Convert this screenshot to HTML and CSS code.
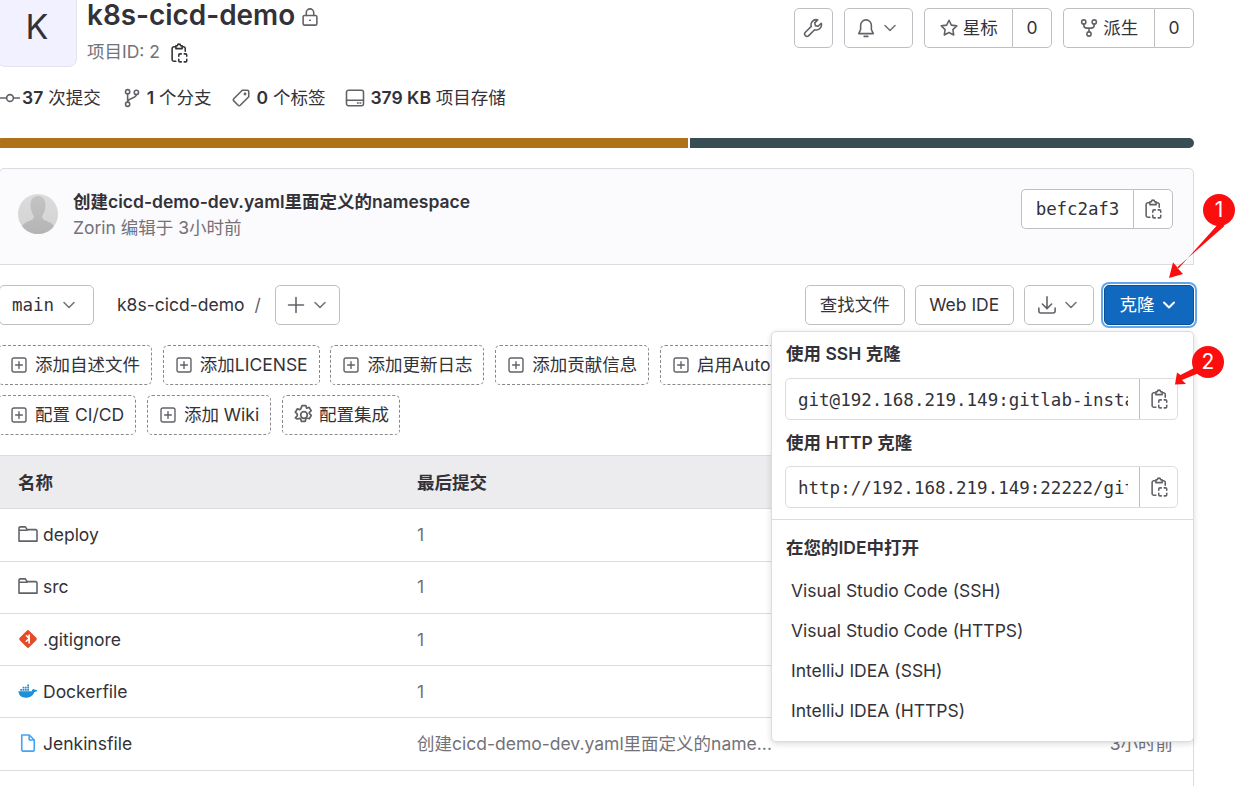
FILE: index.html
```html
<!DOCTYPE html>
<html lang="zh">
<head>
<meta charset="utf-8">
<title>k8s-cicd-demo</title>
<link rel="stylesheet" href="styles.css">
</head>
<body>
<svg class="sprite" width="0" height="0">
  <symbol id="i-copy" viewBox="0 0 16 16"><path d="M5 3H4A1.400 1.400 0 0 0 2.500 4.400v8.800A1.400 1.400 0 0 0 4 14.600H5.500M11 3h.5A1.400 1.400 0 0 1 13 4.400V6.500M5.500 2.200h1.200a1.300 1.300 0 0 1 2.600 0h1.200V4.500H5.500z"/><path d="M7.800 10.500V9.700A1 1 0 0 1 8.800 8.700H9.800M12.200 8.700h1a1 1 0 0 1 1 1v.8M14.200 13v1.100a1 1 0 0 1-1 1H12.200M9.800 15.100h-1a1 1 0 0 1-1-1V13"/></symbol>
  <symbol id="i-chev" viewBox="0 0 16 16"><path d="M4 6l4 4 4-4"/></symbol>
  <symbol id="i-wrench" viewBox="0 0 16 16"><path d="M10.600 1.300a4.200 4.200 0 0 0-4 5.400L1.900 11.400a1.900 1.900 0 0 0 2.700 2.700l4.700-4.700a4.200 4.200 0 0 0 5.300-5.200l-2.500 2.400-2.200-.5-.5-2.200 2.400-2.400a4.200 4.200 0 0 0-1.200-.2z"/></symbol>
  <symbol id="i-bell" viewBox="0 0 16 16"><path d="M8 1.500A4.300 4.300 0 0 0 3.700 5.800v3.400L2.200 12.500h11.600l-1.500-3.300V5.800A4.300 4.300 0 0 0 8 1.500zM6.500 14.700h3"/></symbol>
  <symbol id="i-star" viewBox="0 0 16 16"><path d="M8 1.800l1.900 3.900 4.300.6-3.100 3 .7 4.300L8 11.600l-3.800 2 .7-4.300-3.100-3 4.300-.6z"/></symbol>
  <symbol id="i-fork" viewBox="0 0 16 16"><circle cx="3.800" cy="3.200" r="1.700"/><circle cx="12.200" cy="3.200" r="1.700"/><circle cx="8" cy="12.800" r="1.700"/><path d="M3.800 4.900v.6a2.600 2.600 0 0 0 2.600 2.600h3.200a2.600 2.600 0 0 0 2.600-2.600v-.6M8 8.100v3"/></symbol>
  <symbol id="i-commit" viewBox="0 0 16 16"><circle cx="8" cy="8" r="2.700"/><path d="M0 8h5.300M10.700 8H16"/></symbol>
  <symbol id="i-branch" viewBox="0 0 16 16"><circle cx="4.500" cy="3" r="1.700"/><circle cx="4.500" cy="13" r="1.700"/><circle cx="11.500" cy="3.500" r="1.700"/><path d="M4.500 4.700v6.600M11.500 5.200c0 3.600-7 2.400-7 6.100"/></symbol>
  <symbol id="i-tag" viewBox="0 0 16 16"><path d="M9 1.800h4a1.200 1.200 0 0 1 1.200 1.200v4L7.400 13.800a1.200 1.200 0 0 1-1.700 0L2.200 10.300a1.200 1.200 0 0 1 0-1.700z"/><circle cx="11.200" cy="4.800" r=".5"/></symbol>
  <symbol id="i-disk" viewBox="0 0 16 16"><rect x="1.200" y="1.800" width="13.600" height="12.400" rx="1.600"/><path d="M1.200 9.800h13.600M10 12h.6M12 12h.6"/></symbol>
  <symbol id="i-lock" viewBox="0 0 16 16"><rect x="2.500" y="6.800" width="11" height="7.700" rx="1.200"/><path d="M5 6.800V4.500a3 3 0 0 1 6 0v2.300M7.700 10.600h.6"/></symbol>
  <symbol id="i-plus" viewBox="0 0 16 16"><path d="M8 2v12M2 8h12"/></symbol>
  <symbol id="i-plus-sq" viewBox="0 0 16 16"><rect x="1.800" y="1.800" width="12.400" height="12.400" rx="1.600"/><path d="M8 5v6M5 8h6"/></symbol>
  <symbol id="i-gear" viewBox="0 0 16 16"><circle cx="8" cy="8" r="2.400"/><path d="M6.600 1.200h2.800l.5 1.900 1.900-.6 1.400 2.400-1.400 1.400.1.700 1.400 1.300-1.400 2.400-1.900-.5-.6.5-.5 1.900H6.100l-.5-1.900-.6-.3-1.900.5L1.700 10l1.400-1.400V7.400L1.700 6l1.400-2.400 1.900.5.600-.5z"/></symbol>
  <symbol id="i-down" viewBox="0 0 16 16"><path d="M8 1.500v9.200M4.300 7.200 8 10.900l3.700-3.700M1.500 10.500v2.300a1.600 1.600 0 0 0 1.600 1.600h9.800a1.600 1.600 0 0 0 1.600-1.600v-2.300"/></symbol>
  <symbol id="i-folder" viewBox="0 0 16 16"><path d="M.8 13.700V3.200a.9.9 0 0 1 .9-.9h4.200l1.400 2.200h7a.9.9 0 0 1 .9.9v8.300zM.8 5h6.600"/></symbol>
  <symbol id="i-file" viewBox="0 0 16 16"><path d="M3 1.600h6l4 4v8a.9.9 0 0 1-.9.9H3.900a.9.9 0 0 1-.9-.9zM9 1.600v4h4"/></symbol>
  <symbol id="i-git" viewBox="0 0 16 16"><rect x="2.600" y="2.600" width="10.800" height="10.800" rx="1.400" transform="rotate(45 8 8)" fill="#e44c28"/><path d="M8.900 4.800v6.400M9 7.600 6.800 5.400M6.600 9.800 9 7.600" stroke="#fff" stroke-width="1.300"/></symbol>
  <symbol id="i-docker" viewBox="0 0 18 16"><path fill="#1d8fdb" d="M.4 8.200h12c.2-1.400.9-2 1.500-2 .6 0 1 .4 1.200.9.7-.3 1.500-.2 2.200.3-.4 1-1.300 1.500-2.500 1.400C13.600 12 10.700 14 7 14 3 14 .7 12 .4 8.200z"/><path fill="#1d8fdb" d="M2 6.200h1.600v1.500H2zM4.100 6.200h1.600v1.500H4.100zM6.200 6.200h1.600v1.500H6.200zM8.300 6.200h1.600v1.500H8.300zM4.100 4.200h1.600v1.500H4.100zM6.200 4.200h1.600v1.500H6.200zM8.300 4.200h1.600v1.500H8.300zM8.300 2.200h1.600v1.500H8.300z"/></symbol>
</svg>

<div class="page">
  <header class="head">
    <div class="identicon">K</div>
    <div class="head-main">
      <h1 class="title">k8s-cicd-demo<svg class="icon lock"><use href="#i-lock"/></svg></h1>
      <div class="proj-id">项目ID: 2<svg class="icon copy-id"><use href="#i-copy"/></svg></div>
    </div>
    <div class="head-actions">
      <button class="btn square"><svg class="icon"><use href="#i-wrench"/></svg></button>
      <button class="btn bell"><svg class="icon"><use href="#i-bell"/></svg><svg class="icon chev"><use href="#i-chev"/></svg></button>
      <div class="group">
        <button class="btn star"><svg class="icon"><use href="#i-star"/></svg>星标</button>
        <span class="btn count">0</span>
      </div>
      <div class="group">
        <button class="btn fork"><svg class="icon"><use href="#i-fork"/></svg>派生</button>
        <span class="btn count">0</span>
      </div>
    </div>
  </header>

  <div class="stats">
    <span class="stat s-commit"><svg class="icon"><use href="#i-commit"/></svg><span><b>37</b> 次提交</span></span>
    <span class="stat"><svg class="icon"><use href="#i-branch"/></svg><span><b>1</b> 个分支</span></span>
    <span class="stat"><svg class="icon"><use href="#i-tag"/></svg><span><b>0</b> 个标签</span></span>
    <span class="stat"><svg class="icon"><use href="#i-disk"/></svg><span><b>379 KB</b> 项目存储</span></span>
  </div>

  <div class="langbar"><span class="lang-a"></span><span class="lang-b"></span></div>

  <section class="commit">
    <svg class="avatar" viewBox="0 0 40 40">
      <defs>
        <linearGradient id="ag" x1="0" y1="0" x2="0" y2="1"><stop offset="0" stop-color="#dcdcdc"/><stop offset="1" stop-color="#d2d2d2"/></linearGradient>
        <linearGradient id="pg" x1="0" y1="0" x2="0" y2="1"><stop offset="0" stop-color="#c4c4c4"/><stop offset="1" stop-color="#b4b4b4"/></linearGradient>
        <clipPath id="ac"><circle cx="20" cy="20" r="20"/></clipPath>
      </defs>
      <g clip-path="url(#ac)">
        <rect width="40" height="40" fill="url(#ag)"/>
        <path fill="url(#pg)" d="M20 2c5 0 7.500 3.500 7.500 9 0 5-2 9-3.500 11 .2 2.500 1 3.500 3.500 4.500 5 2 9 3.500 9 8.500v5H3.500v-5c0-5 4-6.500 9-8.500 2.500-1 3.300-2 3.500-4.500-1.500-2-3.500-6-3.500-11 0-5.500 2.500-9 7.500-9z"/>
      </g>
    </svg>
    <div class="commit-text">
      <div class="commit-title">创建cicd-demo-dev.yaml里面定义的namespace</div>
      <div class="commit-sub">Zorin 编辑于 3小时前</div>
    </div>
    <div class="group sha">
      <span class="btn sha-text">befc2af3</span>
      <button class="btn sha-copy"><svg class="icon"><use href="#i-copy"/></svg></button>
    </div>
  </section>

  <div class="toolbar">
    <button class="btn branch mono-label">main<svg class="icon chev"><use href="#i-chev"/></svg></button>
    <span class="crumb">k8s-cicd-demo</span>
    <span class="slash">/</span>
    <button class="btn add"><svg class="icon"><use href="#i-plus"/></svg><svg class="icon chev"><use href="#i-chev"/></svg></button>
    <div class="toolbar-right">
      <button class="btn find">查找文件</button>
      <button class="btn ide">Web IDE</button>
      <button class="btn dl"><svg class="icon"><use href="#i-down"/></svg><svg class="icon chev"><use href="#i-chev"/></svg></button>
      <div class="clone-wrap">
        <button class="btn clone">克隆<svg class="icon chev"><use href="#i-chev"/></svg></button>
        <div class="dropdown">
          <div class="dd-label">使用 SSH 克隆</div>
          <div class="url-group first">
            <div class="url"><span>git@192.168.219.149:gitlab-instance/k8s-cicd-demo.git</span></div>
            <button class="url-copy"><svg class="icon"><use href="#i-copy"/></svg></button>
          </div>
          <div class="dd-label second">使用 HTTP 克隆</div>
          <div class="url-group">
            <div class="url"><span>http://192.168.219.149:22222/gitlab-instance/k8s-cicd-demo.git</span></div>
            <button class="url-copy"><svg class="icon"><use href="#i-copy"/></svg></button>
          </div>
          <div class="dd-divider"></div>
          <div class="dd-label ide-label">在您的IDE中打开</div>
          <ul class="dd-list">
            <li>Visual Studio Code (SSH)</li>
            <li>Visual Studio Code (HTTPS)</li>
            <li>IntelliJ IDEA (SSH)</li>
            <li>IntelliJ IDEA (HTTPS)</li>
          </ul>
        </div>
      </div>
    </div>
  </div>

  <div class="chips">
    <span class="chip"><svg class="icon"><use href="#i-plus-sq"/></svg>添加自述文件</span>
    <span class="chip"><svg class="icon"><use href="#i-plus-sq"/></svg>添加LICENSE</span>
    <span class="chip"><svg class="icon"><use href="#i-plus-sq"/></svg>添加更新日志</span>
    <span class="chip"><svg class="icon"><use href="#i-plus-sq"/></svg>添加贡献信息</span>
    <span class="chip"><svg class="icon"><use href="#i-plus-sq"/></svg>启用Auto DevOps</span>
  </div>
  <div class="chips row2">
    <span class="chip"><svg class="icon"><use href="#i-plus-sq"/></svg>配置 CI/CD</span>
    <span class="chip"><svg class="icon"><use href="#i-plus-sq"/></svg>添加 Wiki</span>
    <span class="chip gear"><svg class="icon"><use href="#i-gear"/></svg>配置集成</span>
  </div>

  <div class="files">
    <div class="row th"><span class="c-name">名称</span><span class="c-msg">最后提交</span><span class="c-time">最后更新</span></div>
    <div class="row"><span class="c-name"><svg class="icon ficon"><use href="#i-folder"/></svg>deploy</span><span class="c-msg">1</span><span class="c-time">3小时前</span></div>
    <div class="row"><span class="c-name"><svg class="icon ficon"><use href="#i-folder"/></svg>src</span><span class="c-msg">1</span><span class="c-time">3小时前</span></div>
    <div class="row"><span class="c-name"><svg class="icon ficon git"><use href="#i-git"/></svg>.gitignore</span><span class="c-msg">1</span><span class="c-time">3小时前</span></div>
    <div class="row"><span class="c-name"><svg class="icon ficon dock"><use href="#i-docker"/></svg>Dockerfile</span><span class="c-msg">1</span><span class="c-time">3小时前</span></div>
    <div class="row"><span class="c-name"><svg class="icon ficon jfile"><use href="#i-file"/></svg>Jenkinsfile</span><span class="c-msg">创建cicd-demo-dev.yaml里面定义的name...</span><span class="c-time">3小时前</span></div>
    <div class="row"></div>
  </div>
</div>

<svg class="marks" viewBox="0 0 1247 786">
  <path d="M1220 222l4.500 4-47.500 41.500 6 6.500-14 4 4-15.500 5.500 6z"/>
  <circle cx="1219" cy="210" r="16"/>
  <path d="M1196 367l3 6-17 7 4 4-11 .5 2-12 3.500 2.500z"/>
  <circle cx="1208" cy="362" r="16"/>
  <text x="1219" y="217">1</text>
  <text x="1208" y="369">2</text>
</svg>
</body>
</html>
```
FILE: styles.css
```css
* { box-sizing: border-box; }
html, body { margin: 0; height: 786px; overflow: hidden; }
body {
  position: relative;
  background: #fff;
  color: #333238;
  font: 400 17.5px/24px Inter, "Noto Sans CJK SC", sans-serif;
}
.sprite { position: absolute; }
.icon {
  width: 20px; height: 20px; flex: none;
  fill: none; stroke: currentColor; stroke-width: 1.25;
  stroke-linecap: round; stroke-linejoin: round;
  color: #626168;
}
.page { width: 1195px; margin: -13px 0 0 -1px; position: relative; }
button { font: inherit; color: inherit; background: #fff; cursor: pointer; }

.btn {
  height: 40px; display: inline-flex; align-items: center; justify-content: center;
  border: 1px solid #bfbfc3; border-radius: 5px; background: #fff; padding: 0 15px;
  color: #333238;
}
.chev { width: 20px; height: 20px; color: #737278; }
.group { display: inline-flex; }
.group .btn:first-child { border-radius: 5px 0 0 5px; border-right: 0; }
.group .btn:last-child { border-radius: 0 5px 5px 0; border-left: 1px solid #bfbfc3; }

.head { display: flex; align-items: flex-start; height: 80px; }
.identicon {
  width: 80px; height: 80px; margin-left: -2px; flex: none;
  display: flex; align-items: center; justify-content: center;
  background: #f1f1ff; border: 1px solid #e4e4f0; border-radius: 8px;
  font-size: 34px; color: #333238;
}
.head-main { margin-left: 10px; flex: 1; }
.title {
  margin: 10px 0 0; font-size: 27.900px; line-height: 36px; font-weight: 600;
  display: flex; align-items: center;
}
.lock { margin-left: 5px; margin-top: 4px; }
.proj-id { margin-top: 7px; color: #737278; display: flex; align-items: center; }
.copy-id { margin: 2px 0 0 9px; color: #333238; }
.head-actions { display: flex; gap: 10.500px; padding-top: 21px; }
.square { width: 39.500px; padding: 0; }
.bell { width: 69.500px; padding: 0; gap: 4px; }
.star { width: 88.500px; padding: 0; gap: 4px; }
.fork { width: 91.500px; padding: 0; gap: 4px; }
.count { width: 40px; padding: 0; }

.stats { display: flex; margin-top: 19px; height: 24px; align-items: center; gap: 20px; margin-left: 1px; }
.stat { display: inline-flex; align-items: center; gap: 5px; white-space: nowrap; }
.stat.s-commit { gap: 2px; margin-right: 1px; }
.stat b { font-weight: 600; }

.langbar { display: flex; gap: 2px; height: 10px; margin-top: 28px; }
.lang-a { width: 689px; background: #b07219; border-radius: 2px 0 0 2px; }
.lang-b { flex: 1; background: #384d54; border-radius: 0 5px 5px 0; }

.commit {
  margin-top: 20px; height: 97px; display: flex; align-items: flex-start;
  padding: 0 20px 0 18px;
  background: #fbfafd; border: 1px solid #dcdcde; border-radius: 5px 5px 0 0;
}
.avatar { width: 40px; height: 40px; flex: none; margin: 25px 15px 0 0; }
.commit-text { flex: 1; margin-top: 20px; }
.commit-title { font-weight: 600; line-height: 26px; }
.commit-sub { color: #737278; line-height: 26px; }
.sha { margin-top: 20px; }
.sha-text { font-family: "DejaVu Sans Mono", monospace; width: 112px; padding: 0; letter-spacing: -.1px; }
.sha-copy { width: 40px; padding: 0; }

.toolbar { display: flex; align-items: center; margin-top: 20px; height: 40px; }
.mono-label { font-family: "DejaVu Sans Mono", monospace; }
.branch { width: 95px; padding: 0 2px 0 0; gap: 5px; }
.crumb { margin-left: 23px; }
.slash { margin-left: 10px; color: #626168; }
.add { width: 65.500px; margin-left: 14px; padding: 0; gap: 4px; }
.toolbar-right { margin-left: auto; display: flex; gap: 10.500px; }
.find { width: 99.500px; padding: 0; }
.ide { width: 98.500px; padding: 0; }
.dl { width: 69.500px; padding: 0; gap: 4px; }
.clone-wrap { position: relative; }
.clone {
  width: 90px; padding: 0; gap: 4px; font-weight: 400;
  background: #1068bf; border-color: #0b4f94; color: #fff;
  box-shadow: 0 0 0 1px #fff, 0 0 0 3px #63a6e9;
}
.clone .icon { color: #fff; stroke-width: 1.6; }

.dropdown {
  position: absolute; z-index: 5; top: 46px; right: 0; width: 423px; height: 411px;
  background: #fff; border: 1px solid #dcdcde; border-radius: 5px;
  box-shadow: 0 2px 6px rgba(0, 0, 0, .14);
  padding: 10px 15px 0 14px;
}
.dd-label { font-weight: 600; height: 24px; }
.dd-label.second { margin-top: 11px; }
.url-group { display: flex; height: 42px; margin: 11px 0 0 -1px; border: 1px solid #dcdcde; border-radius: 5px; }
.url-group.first { margin-top: 12px; }
.url {
  flex: 1; min-width: 0; padding: 1px 11px 0 12px; display: flex; align-items: center;
  font-family: "DejaVu Sans Mono", monospace; color: #333238;
}
.url span { display: block; overflow: hidden; white-space: nowrap; }
.url-copy {
  width: 38px; flex: none; border: 0; border-left: 1px solid #bfbfc3; padding: 0;
  display: flex; align-items: center; justify-content: center; border-radius: 0 5px 5px 0;
}
.dd-divider { height: 1px; background: #dcdcde; margin: 11px -15px 0 -14px; }
.ide-label { margin-top: 16px; }
.dd-list { list-style: none; margin: 11px 0 0; padding: 0 0 0 5px; }
.dd-list li { height: 40px; line-height: 40px; white-space: nowrap; }

.chips { display: flex; gap: 10.800px; margin: 20px 0 0 -1px; white-space: nowrap; }
.chips.row2 { margin-top: 10.500px; }
.chip {
  height: 39.500px; display: inline-flex; align-items: center; gap: 6px; padding: 0 11px 0 11px;
  border: 1px dashed #89888d; border-radius: 5px;
}
.chip .icon { width: 18px; height: 18px; margin-right: 1px; }
.chip.gear { padding: 0 10.500px 0 10px; gap: 5px; }
.chip.gear .icon { width: 22px; height: 22px; margin-right: -1px; }

.files { margin-top: 20.900px; border-right: 1px solid #dcdcde; border-top: 1px solid #dcdcde; }
.row {
  display: flex; align-items: center; height: 52.250px; padding: 0 20px 0 19px;
  border-bottom: 1px solid #dcdcde;
}
.row.th { height: 53px; background: #ececef; font-weight: 600; padding-top: 1px; }
.c-name { width: 399px; flex: none; display: flex; align-items: center; gap: 5px; }
.c-msg { flex: 1; color: #737278; white-space: nowrap; }
.c-time { color: #737278; white-space: nowrap; }
.th .c-msg { color: #333238; }
.th .c-time { color: #333238; }
.ficon { margin-bottom: 2px; }
.git, .dock { stroke: none; }
.jfile { color: #42a5f5; stroke-width: 1.300; }

.marks { position: absolute; left: 0; top: 0; width: 1247px; height: 786px; z-index: 10; pointer-events: none; }
.marks path, .marks circle { fill: #fb0e0e; }
.marks text { fill: #fff; font: 400 21px Inter, sans-serif; text-anchor: middle; }
```
